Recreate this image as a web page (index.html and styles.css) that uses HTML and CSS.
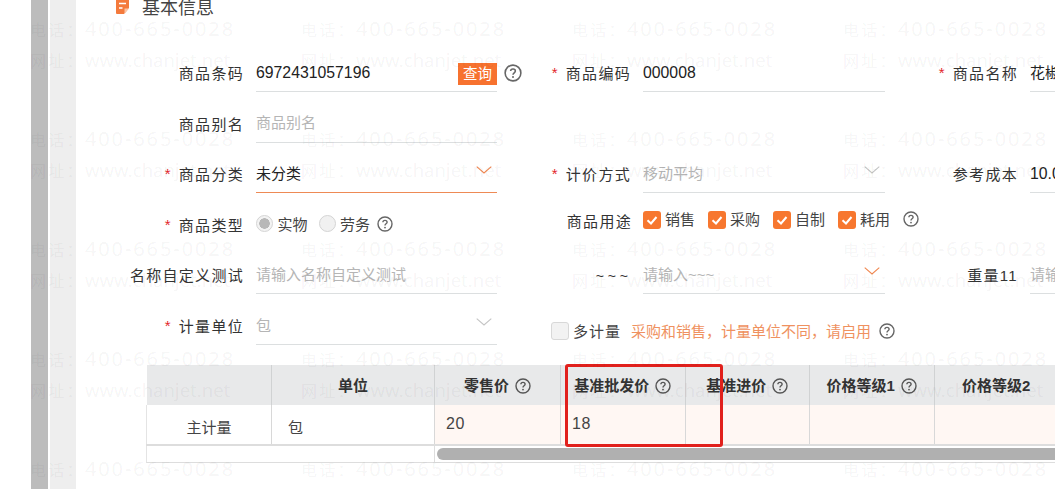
FILE: index.html
```html
<!DOCTYPE html>
<html lang="zh-CN">
<head>
  <meta charset="UTF-8">
  <title>基本信息</title>
  <link rel="stylesheet" href="styles.css">
</head>
<body>
  <svg class="icon-defs" width="0" height="0">
    <symbol id="help" viewBox="0 0 16 16">
      <circle cx="8" cy="8" r="7" fill="none" stroke="currentColor" stroke-width="1.4"/>
      <path d="M5.900 6.300c0-1.200 1-1.900 2.100-1.900s2.100.7 2.100 1.800c0 1.600-2.100 1.600-2.100 3.300" fill="none" stroke="currentColor" stroke-width="1.400"/>
      <circle cx="8" cy="11.600" r=".9" fill="currentColor"/>
    </symbol>
    <symbol id="arrow" viewBox="0 0 16 8">
      <path d="M.7.7 8 7 15.300.7" fill="none" stroke="currentColor" stroke-width="1.100"/>
    </symbol>
    <symbol id="tick" viewBox="0 0 18 18">
      <path d="M4.500 9.200 8 12.500l5.500-6.500" fill="none" stroke="#fff" stroke-width="2"/>
    </symbol>
  </svg>

  <div class="page">
    <div class="side-gap"></div>
    <div class="side-bar"></div>
    <div class="side-rail"></div>

    <div class="main">
      <div class="section-title">
        <svg class="title-icon" viewBox="0 0 13 16">
          <path d="M1 0h11a1 1 0 0 1 1 1v9l-5 6H1a1 1 0 0 1-1-1V1a1 1 0 0 1 1-1z" fill="#f47a3c"/>
          <path d="M3 5.500h7M3 10h3.500" stroke="#fff" stroke-width="1.600"/>
          <path d="M13 10.500H8.500V16z" fill="#fbc4a4"/>
        </svg>
        <span>基本信息</span>
      </div>

      <!-- 表单 -->
      <div class="form-grid">
        <div class="field">
          <label class="field-label">商品条码</label>
          <div class="control first has-btn">
            <span class="value">6972431057196</span>
            <span class="query-btn">查询</span>
            <svg class="help help-query"><use href="#help"/></svg>
          </div>
        </div>
        <div class="field">
          <label class="field-label"><i class="star">*</i>商品编码</label>
          <div class="control"><span class="value">000008</span></div>
        </div>
        <div class="field">
          <label class="field-label"><i class="star">*</i>商品名称</label>
          <div class="control"><span class="value value-cn">花椒</span></div>
        </div>

        <div class="field">
          <label class="field-label">商品别名</label>
          <div class="control first alias"><span class="placeholder">商品别名</span></div>
        </div>
        <div class="field"></div>
        <div class="field"></div>

        <div class="field">
          <label class="field-label"><i class="star">*</i>商品分类</label>
          <div class="control first active">
            <span class="value value-cn">未分类</span>
            <svg class="arrow arrow-on"><use href="#arrow"/></svg>
          </div>
        </div>
        <div class="field">
          <label class="field-label"><i class="star">*</i>计价方式</label>
          <div class="control">
            <span class="placeholder">移动平均</span>
            <svg class="arrow"><use href="#arrow"/></svg>
          </div>
        </div>
        <div class="field">
          <label class="field-label">参考成本</label>
          <div class="control"><span class="value">10.00</span></div>
        </div>

        <div class="field">
          <label class="field-label"><i class="star">*</i>商品类型</label>
          <div class="control first plain">
            <span class="radio checked"></span><span class="opt">实物</span>
            <span class="radio"></span><span class="opt">劳务</span>
            <svg class="help"><use href="#help"/></svg>
          </div>
        </div>
        <div class="field">
          <label class="field-label shift">商品用途</label>
          <div class="control plain checks">
            <span class="check on"><svg><use href="#tick"/></svg></span><span class="opt">销售</span>
            <span class="check on"><svg><use href="#tick"/></svg></span><span class="opt">采购</span>
            <span class="check on"><svg><use href="#tick"/></svg></span><span class="opt">自制</span>
            <span class="check on"><svg><use href="#tick"/></svg></span><span class="opt">耗用</span>
            <svg class="help"><use href="#help"/></svg>
          </div>
        </div>
        <div class="field"></div>

        <div class="field">
          <label class="field-label">名称自定义测试</label>
          <div class="control first"><span class="placeholder">请输入名称自定义测试</span></div>
        </div>
        <div class="field">
          <label class="field-label tilde">~ ~ ~</label>
          <div class="control">
            <span class="placeholder">请输入~~~</span>
            <svg class="arrow arrow-on"><use href="#arrow"/></svg>
          </div>
        </div>
        <div class="field">
          <label class="field-label">重量11</label>
          <div class="control"><span class="placeholder">请输入重量11</span></div>
        </div>

        <div class="field">
          <label class="field-label"><i class="star">*</i>计量单位</label>
          <div class="control first">
            <span class="placeholder">包</span>
            <svg class="arrow"><use href="#arrow"/></svg>
          </div>
        </div>
        <div class="field multi-unit">
          <span class="check"></span>
          <span class="multi-label">多计量</span>
          <span class="hint">采购和销售，计量单位不同，请启用</span>
          <svg class="help"><use href="#help"/></svg>
        </div>
        <div class="field"></div>
      </div>

      <!-- 价格表 -->
      <div class="unit-table">
        <table>
          <colgroup>
            <col class="col-name"><col class="col-unit"><col class="col-a"><col class="col-b">
            <col class="col-b"><col class="col-b"><col class="col-b">
          </colgroup>
          <thead>
            <tr>
              <th></th>
              <th>单位</th>
              <th>零售价<svg class="help"><use href="#help"/></svg></th>
              <th>基准批发价<svg class="help"><use href="#help"/></svg></th>
              <th>基准进价<svg class="help"><use href="#help"/></svg></th>
              <th>价格等级1<svg class="help"><use href="#help"/></svg></th>
              <th>价格等级2</th>
            </tr>
          </thead>
          <tbody>
            <tr>
              <td class="cell-name">主计量</td>
              <td class="cell-unit">包</td>
              <td class="cell-price">20</td>
              <td class="cell-price">18</td>
              <td class="cell-price"></td>
              <td class="cell-price"></td>
              <td class="cell-price"></td>
            </tr>
          </tbody>
        </table>
        <div class="table-foot">
          <div class="foot-fixed"></div>
          <div class="foot-track"><div class="scroll-thumb"></div></div>
        </div>
        <div class="mark-box"></div>
      </div>
    </div>
  </div>

  <div class="watermark">
    <div class="wm"><p class="tel"><span>电话：</span>400-665-0028</p><p class="url"><span>网址：</span>www.chanjet.net</p></div>
    <div class="wm"><p class="tel"><span>电话：</span>400-665-0028</p><p class="url"><span>网址：</span>www.chanjet.net</p></div>
    <div class="wm"><p class="tel"><span>电话：</span>400-665-0028</p><p class="url"><span>网址：</span>www.chanjet.net</p></div>
    <div class="wm"><p class="tel"><span>电话：</span>400-665-0028</p><p class="url"><span>网址：</span>www.chanjet.net</p></div>
    <div class="wm"><p class="tel"><span>电话：</span>400-665-0028</p><p class="url"><span>网址：</span>www.chanjet.net</p></div>
    <div class="wm"><p class="tel"><span>电话：</span>400-665-0028</p><p class="url"><span>网址：</span>www.chanjet.net</p></div>
    <div class="wm"><p class="tel"><span>电话：</span>400-665-0028</p><p class="url"><span>网址：</span>www.chanjet.net</p></div>
    <div class="wm"><p class="tel"><span>电话：</span>400-665-0028</p><p class="url"><span>网址：</span>www.chanjet.net</p></div>
    <div class="wm"><p class="tel"><span>电话：</span>400-665-0028</p><p class="url"><span>网址：</span>www.chanjet.net</p></div>
    <div class="wm"><p class="tel"><span>电话：</span>400-665-0028</p><p class="url"><span>网址：</span>www.chanjet.net</p></div>
    <div class="wm"><p class="tel"><span>电话：</span>400-665-0028</p><p class="url"><span>网址：</span>www.chanjet.net</p></div>
    <div class="wm"><p class="tel"><span>电话：</span>400-665-0028</p><p class="url"><span>网址：</span>www.chanjet.net</p></div>
    <div class="wm"><p class="tel"><span>电话：</span>400-665-0028</p><p class="url"><span>网址：</span>www.chanjet.net</p></div>
    <div class="wm"><p class="tel"><span>电话：</span>400-665-0028</p><p class="url"><span>网址：</span>www.chanjet.net</p></div>
    <div class="wm"><p class="tel"><span>电话：</span>400-665-0028</p><p class="url"><span>网址：</span>www.chanjet.net</p></div>
    <div class="wm"><p class="tel"><span>电话：</span>400-665-0028</p><p class="url"><span>网址：</span>www.chanjet.net</p></div>
    <div class="wm"><p class="tel"><span>电话：</span>400-665-0028</p></div>
    <div class="wm"><p class="tel"><span>电话：</span>400-665-0028</p></div>
    <div class="wm"><p class="tel"><span>电话：</span>400-665-0028</p></div>
    <div class="wm"><p class="tel"><span>电话：</span>400-665-0028</p></div>
  </div>
</body>
</html>
```

FILE: styles.css
```css
html, body {
  margin: 0;
  padding: 0;
  height: 100%;
  overflow: hidden;
  background: #fff;
}

body {
  position: relative;
  font-family: "Liberation Sans", "Noto Sans CJK SC", sans-serif;
  font-size: 15px;
  color: #333;
}

.icon-defs {
  display: block;
  height: 0;
}

.page {
  display: flex;
  height: 489px;
  overflow: hidden;
}

/* Left rails */
.side-gap {
  flex: 0 0 31px;
}

.side-bar {
  flex: 0 0 17px;
  background: #bcbcbc;
}

.side-rail {
  flex: 0 0 26px;
  margin-left: 2px;
  background: #eeeeee;
}

.main {
  flex: 0 0 979px;
  min-width: 0;
}

/* Section title */
.section-title {
  display: flex;
  align-items: center;
  gap: 13px;
  height: 20px;
  margin-top: -4px;
  padding-left: 40px;
  font-size: 18px;
  color: #444;
}

.title-icon {
  width: 13px;
  height: 16px;
}

/* Form */
.form-grid {
  display: grid;
  grid-template-columns: repeat(3, 387px);
  grid-auto-rows: 36px;
  row-gap: 14.600px;
  margin-top: 40px;
  margin-left: 37px;
}

.field {
  display: grid;
  grid-template-columns: 130px 242px;
  column-gap: 13px;
  align-items: stretch;
  min-width: 0;
}

.field-label {
  display: flex;
  align-items: center;
  justify-content: flex-end;
  padding-bottom: 3px;
  letter-spacing: 1.300px;
  margin-right: -1px;
  white-space: nowrap;
  color: #333;
}

.field-label.shift {
  margin-right: -2px;
  padding-bottom: 10px;
}

.field-label.tilde {
  padding-bottom: 0;
  font-size: 14px;
  letter-spacing: 0;
  margin-right: 2px;
}

.star {
  margin-right: 7px;
  color: #e3262c;
  font-style: normal;
  font-size: 15px;
  line-height: 1;
}

.control {
  display: flex;
  align-items: center;
  position: relative;
  padding-bottom: 4px;
  border-bottom: 1px solid #dcdfe0;
  box-sizing: border-box;
  white-space: nowrap;
  overflow: hidden;
}

.control.first {
  width: 241px;
}

.control.alias {
  padding-bottom: 6px;
}

.control.has-btn {
  overflow: visible;
}

.control.active {
  border-bottom-color: #ee8a55;
}

.control.plain {
  border-bottom: 0;
  overflow: visible;
}

.value {
  margin-top: 2px;
  color: #222;
  font-size: 15.800px;
}

.value-cn {
  margin-top: 0;
  font-size: 15px;
}

.placeholder {
  color: #b5b5b5;
  font-size: 15px;
}

.query-btn {
  position: absolute;
  right: 0;
  top: 7px;
  width: 39px;
  height: 22px;
  background: #f7722f;
  color: #fff;
  font-size: 14.500px;
  line-height: 22px;
  text-align: center;
}

.help {
  flex: none;
  width: 16px;
  height: 16px;
  color: #666;
}

.help-query {
  position: absolute;
  right: -25px;
  top: 8px;
  width: 18px;
  height: 18px;
}

.arrow {
  position: absolute;
  right: 5px;
  top: 9px;
  width: 16px;
  height: 8px;
  color: #c4c4c4;
}

.arrow-on {
  color: #f0874f;
}

.radio {
  flex: none;
  box-sizing: border-box;
  width: 17px;
  height: 17px;
  border: 1px solid #d4d4d4;
  border-radius: 50%;
  background: #f1f1f1;
}

.radio.checked {
  background: radial-gradient(circle, #b8b8b8 0 5px, #f3f3f3 5.500px);
}

.opt {
  margin: 0 11px 0 4.500px;
  font-size: 15px;
  color: #444;
}

.plain .help {
  margin-left: -4px;
}

.checks {
  align-items: flex-start;
  padding: 3px 0 0;
  overflow: visible;
}

.check {
  flex: none;
  box-sizing: border-box;
  display: block;
  width: 18px;
  height: 18px;
  border-radius: 3px;
  border: 1px solid #d8d8d8;
  background: #f2f2f2;
}

.check.on {
  border: 0;
  background: #f7772f;
}

.check svg {
  display: block;
  width: 18px;
  height: 18px;
}

.checks .opt {
  margin: 0 13px 0 4px;
  line-height: 18px;
}

.checks .help {
  margin-left: 0;
}

.multi-unit {
  display: flex;
  column-gap: 0;
  align-items: center;
  padding: 8px 0 0 51px;
  box-sizing: border-box;
  white-space: nowrap;
}

.multi-label {
  margin-left: 4px;
  letter-spacing: 1px;
  color: #444;
}

.hint {
  margin: 0 8px 0 10px;
  color: #ef9160;
  font-size: 15px;
}

/* Unit price table */
.unit-table {
  position: relative;
  width: 960px;
  margin-top: 20px;
  margin-left: 70px;
}

table {
  table-layout: fixed;
  width: 912px;
  border-collapse: collapse;
  border-bottom: 2px solid #dddddd;
}

.col-name { width: 125px; }
.col-unit { width: 163px; }
.col-a { width: 126px; }
.col-b { width: 124.500px; }

th {
  height: 40px;
  padding: 0;
  background: #e8e9ea;
  border-right: 1px solid #d0d2d3;
  font-size: 15px;
  font-weight: 700;
  color: #333;
  text-align: center;
  white-space: nowrap;
}

th .help {
  margin-left: 6px;
  vertical-align: -3px;
  color: #555;
}

td {
  height: 40px;
  padding: 0;
  box-sizing: border-box;
  border-right: 1px solid #d8d8d8;
  color: #444;
}

.cell-name {
  text-align: center;
  padding-top: 4px;
  font-size: 15px;
  border-left: 1px solid #e4e4e4;
}

.cell-unit {
  padding: 4px 0 0 16px;
  font-size: 15px;
}

.cell-price {
  padding: 0 0 1px 11px;
  font-size: 16px;
  letter-spacing: 0.500px;
  background: #fff7f3;
}

.table-foot {
  display: flex;
  height: 17px;
  box-sizing: border-box;
  border-bottom: 1px solid #dddddd;
  border-left: 1px solid #e4e4e4;
}

.foot-fixed {
  flex: 0 0 287px;
  border-right: 1px solid #dddddd;
}

.foot-track {
  flex: 1;
  padding: 2px 0 0 2px;
}

.scroll-thumb {
  height: 12px;
  border-radius: 6px;
  background: #b0b0b0;
}

.mark-box {
  position: absolute;
  left: 419px;
  top: -1px;
  width: 158px;
  height: 83px;
  box-sizing: border-box;
  border: 3px solid #e1201c;
  border-radius: 3px;
}

/* Watermark laid over everything */
.watermark {
  position: absolute;
  left: 30px;
  top: 14px;
  display: grid;
  grid-template-columns: repeat(4, 271px);
  grid-auto-rows: 110px;
  pointer-events: none;
  font-family: "Noto Sans", "Noto Sans CJK SC", sans-serif;
  color: rgba(0, 0, 0, 0.05);
  white-space: nowrap;
}

.wm p {
  margin: 0;
  line-height: 30px;
}

.wm span {
  font-size: 16px;
  letter-spacing: 2.300px;
}

.tel {
  font-size: 20px;
  letter-spacing: 1.900px;
}

.url {
  font-size: 18.500px;
}
```
